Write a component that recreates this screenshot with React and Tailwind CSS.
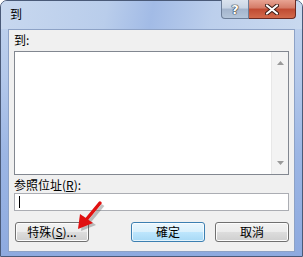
import React from 'react';

const font = { fontFamily: '"Noto Sans CJK TC", "Noto Sans CJK SC", sans-serif' };

const Button = ({ children, primary }) => (
  <div
    className={
      'w-[74px] h-[20px] rounded-[3px] border flex items-center justify-center text-[12px] leading-none text-black ' +
      (primary
        ? 'border-[#3c7fb1] bg-[linear-gradient(#eaf6fd_0%,#d9f0fc_50%,#bee6fd_50%,#a7d9f5_100%)] shadow-[inset_0_0_0_1px_#ffffffb0]'
        : 'border-[#707070] bg-[linear-gradient(#f2f2f2_0%,#ebebeb_50%,#dddddd_50%,#cfcfcf_100%)] shadow-[inset_0_0_0_1px_#fcfcfc]')
    }
  >
    {children}
  </div>
);

const App = () => {
  return (
    <div className="relative w-[303px] h-[257px] bg-white" style={font}>
      {/* Window frame */}
      <div className="w-[303px] h-[257px] rounded-t-[7px] border border-[#4a5a78] bg-[linear-gradient(180deg,#c2d4ee_0%,#b3c8ea_30%,#9cb6e4_60%,#8eaadf_100%)] flex flex-col">
        {/* Title bar */}
        <div className="h-[28px] flex items-start shrink-0 bg-[linear-gradient(100deg,#c8d8ef_0%,#b9cdeb_35%,#a2bbe6_50%,#bccfec_70%,#c9d9ef_100%)] rounded-t-[6px]">
          <div className="pl-[9px] pt-[6px] text-[12px] leading-[14px] text-black">到</div>
          <div className="ml-auto flex mr-[6px] -mt-px">
            <div className="w-[28px] h-[19px] rounded-bl-[4px] border border-[#6d7e98] border-t-0 bg-[linear-gradient(#dbe3ee_0%,#c8d4e4_45%,#a3b4cc_50%,#b4c5da_100%)] flex items-center justify-center">
              <span className="text-[13px] font-bold leading-none text-white [text-shadow:0_0_1px_#222,0_0_1px_#222,0_0_1px_#222]" style={{ fontFamily: '"DejaVu Sans", sans-serif' }}>?</span>
            </div>
            <div className="w-[47px] h-[19px] rounded-br-[4px] border border-[#6b2a22] border-t-0 border-l-0 bg-[linear-gradient(#e8a493_0%,#d47a66_45%,#c04a32_50%,#d26a4c_100%)] flex items-center justify-center">
              <svg width="14" height="11" viewBox="0 0 14 11">
                <path d="M2 1.5 L12 9.5 M12 1.5 L2 9.5" stroke="#3a1a14" strokeWidth="4" strokeLinecap="round" />
                <path d="M2 1.5 L12 9.5 M12 1.5 L2 9.5" stroke="#ffffff" strokeWidth="2.2" strokeLinecap="round" />
              </svg>
            </div>
          </div>
        </div>

        {/* Client area */}
        <div className="mx-[7px] h-[223px] bg-[#f0f0f0] border border-[#8da2c6] flex flex-col px-[5px] text-[12px] text-black">
          <div className="h-[21px] pt-[3px] leading-[14px]">到:</div>

          {/* List box */}
          <div className="h-[124px] border border-[#828790] bg-white flex">
            <div className="flex-1" />
            <div className="w-[17px] bg-[#f3f3f3] border-l border-[#e8e8e8] flex flex-col items-center justify-between py-[9px]">
              <svg width="7" height="4" viewBox="0 0 7 4"><path d="M0 4 L3.5 0 L7 4 Z" fill="#9a9a9a" /></svg>
              <svg width="7" height="4" viewBox="0 0 7 4"><path d="M0 0 L3.5 4 L7 0 Z" fill="#9a9a9a" /></svg>
            </div>
          </div>

          <div className="h-[18px] pt-[3px] leading-[14px]">
            参照位址(<span className="underline">R</span>):
          </div>

          {/* Text box */}
          <div className="h-[18px] border border-[#abadb3] bg-white flex items-center pl-[4px]">
            <div className="w-px h-[12px] bg-black" />
          </div>

          {/* Buttons */}
          <div className="mt-[11px] flex pl-px">
            <Button>特殊(<span className="underline">S</span>)...</Button>
            <div className="ml-[42px]"><Button primary>確定</Button></div>
            <div className="ml-[10px]"><Button>取消</Button></div>
          </div>
        </div>
      </div>

      {/* Red annotation arrow */}
      <svg className="absolute left-[70px] top-[196px]" width="40" height="40" viewBox="0 0 40 40">
        <g transform="translate(3 2)" opacity="0.35">
          <path d="M30 7 L16 24" stroke="#555" strokeWidth="3.5" />
          <path d="M8 33 L10 18 L23 27 Z" fill="#555" />
        </g>
        <path d="M30 7 L16 24" stroke="#e01010" strokeWidth="3.5" strokeLinecap="round" />
        <path d="M8 33 L10 18 L23 27 Z" fill="#e01010" />
      </svg>
    </div>
  );
};

export default App;
